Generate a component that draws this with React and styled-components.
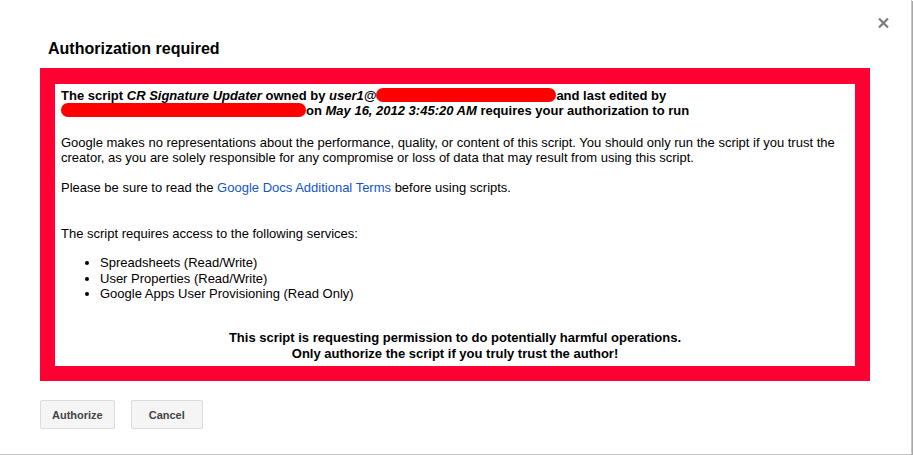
import styled, { createGlobalStyle } from 'styled-components';

const GlobalStyle = createGlobalStyle`
  html, body {
    margin: 0;
    padding: 0;
    background: #fff;
  }
  body {
    font-family: "Liberation Sans", Arial, sans-serif;
    color: #000;
  }
`;

const Dialog = styled.div`
  position: relative;
  box-sizing: border-box;
  width: 912px;
  height: 455px;
  background: #fff;
  border-right: 1px solid #c4c4c4;
  border-bottom: 1px solid #c4c4c4;
  box-shadow: 1px 1px 0 #a8a8a8;
  padding: 39px 40px 0 40px;
`;

const CloseButton = styled.button`
  position: absolute;
  top: 17px;
  right: 22px;
  width: 12px;
  height: 12px;
  padding: 0;
  border: 0;
  background: none;
  cursor: pointer;
  display: flex;
  align-items: center;
  justify-content: center;
`;

const Title = styled.h2`
  margin: 0 0 9px 8px;
  font-size: 16px;
  line-height: 20px;
  font-weight: bold;
`;

const WarningFrame = styled.div`
  box-sizing: border-box;
  width: 830px;
  height: 313px;
  border: 15px solid #ff0033;
  border-top-width: 16px;
  background: #fff;
  padding: 4px 6px;
  font-size: 13px;
  line-height: 15px;
`;

const Para = styled.p`
  margin: ${(p) => p.$top || 0}px 0 0 0;
  font-weight: ${(p) => (p.$bold ? 'bold' : 'normal')};
  text-align: ${(p) => (p.$center ? 'center' : 'left')};
  line-height: ${(p) => p.$lh || 15}px;
`;

const Redacted = styled.span`
  display: inline-block;
  vertical-align: -2px;
  width: ${(p) => p.$w}px;
  height: 14px;
  border-radius: 7px;
  background: #ff0000;
`;

const Link = styled.a`
  color: #1155cc;
  text-decoration: none;
`;

const ServiceList = styled.ul`
  margin: 14px 0 0 0;
  padding-left: 39px;
  line-height: 15.5px;
`;

const Actions = styled.div`
  display: flex;
  gap: 16px;
  margin-top: 19px;
`;

const Button = styled.button`
  box-sizing: border-box;
  height: 29px;
  min-width: 72px;
  padding: 0 11px;
  border: 1px solid #dcdcdc;
  border-radius: 2px;
  background: #f5f5f5;
  color: #444;
  font-family: "Liberation Sans", Arial, sans-serif;
  font-size: 11px;
  font-weight: bold;
  cursor: pointer;
`;

const CloseIcon = () => (
  <svg width="11" height="10" viewBox="0 0 11 10">
    <path d="M1 0.5 L10 9.5 M10 0.5 L1 9.5" stroke="#7d7d7d" strokeWidth="2.2" />
  </svg>
);

const services = [
  'Spreadsheets (Read/Write)',
  'User Properties (Read/Write)',
  'Google Apps User Provisioning (Read Only)',
];

const App = () => (
  <>
    <GlobalStyle />
    <Dialog>
      <CloseButton aria-label="Close">
        <CloseIcon />
      </CloseButton>
      <Title>Authorization required</Title>
      <WarningFrame>
        <Para $bold>
          The script <i>CR Signature Updater</i> owned by <i>user1@</i>
          <Redacted $w={180} />
          and last edited by
          <br />
          <Redacted $w={245} />
          on <i>May 16, 2012 3:45:20 AM</i> requires your authorization to run
        </Para>
        <Para $top={17}>
          Google makes no representations about the performance, quality, or content of this script. You should only run the script if you trust the creator, as you are solely responsible for any compromise or loss of data that may result from using this script.
        </Para>
        <Para $top={15}>
          Please be sure to read the <Link href="#">Google Docs Additional Terms</Link> before using scripts.
        </Para>
        <Para $top={31}>The script requires access to the following services:</Para>
        <ServiceList>
          {services.map((s) => (
            <li key={s}>{s}</li>
          ))}
        </ServiceList>
        <Para $top={28} $bold $center $lh={16}>
          This script is requesting permission to do potentially harmful operations.
          <br />
          Only authorize the script if you truly trust the author!
        </Para>
      </WarningFrame>
      <Actions>
        <Button>Authorize</Button>
        <Button>Cancel</Button>
      </Actions>
    </Dialog>
  </>
);

export default App;
